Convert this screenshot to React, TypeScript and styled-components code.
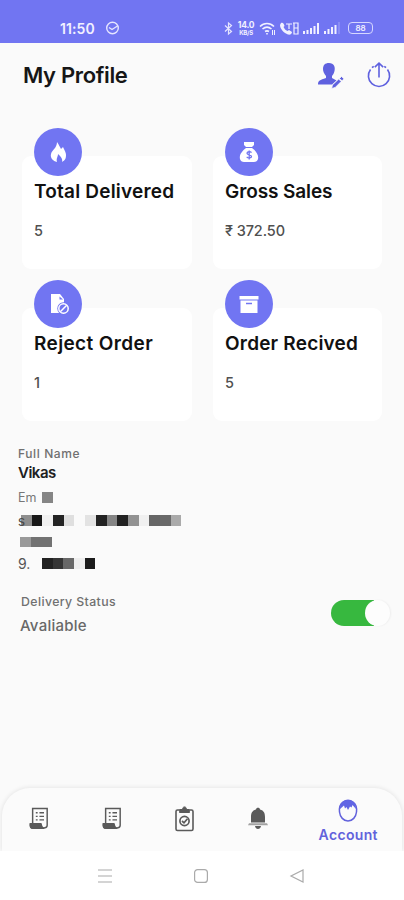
import React from "react";
import styled, { createGlobalStyle } from "styled-components";

const Global = createGlobalStyle`
  * { box-sizing: border-box; }
  body { margin: 0; background: #fafafa; font-family: Inter, "Liberation Sans", sans-serif; }
  svg { display: block; overflow: visible; }
`;

const ACCENT = "#7175f2";

const Screen = styled.div`
  width: 404px;
  height: 900px;
  display: flex;
  flex-direction: column;
  background: #fafafa;
  overflow: hidden;
`;
const StatusBar = styled.div`
  height: 43px;
  flex: none;
  display: flex;
  justify-content: space-between;
  padding: 17px 31px 0 60px;
  background: ${ACCENT};
  color: #f1f1ff;
`;
const Cluster = styled.div<{ $gap: number }>`
  display: flex;
  align-items: center;
  height: 22px;
  gap: ${(p) => p.$gap}px;
`;
const Clock = styled.span`
  width: 36px;
  font-size: 14px;
  font-weight: 600;
  letter-spacing: 0.1px;
`;
const NetSpeed = styled.div`
  display: flex;
  flex-direction: column;
  align-items: center;
  width: 18px;
  font-weight: 700;
  font-size: 8.5px;
  line-height: 10px;
  letter-spacing: -0.2px;
`;
const SpeedUnit = styled.span`
  margin-top: -1px;
  font-size: 6px;
  line-height: 7px;
`;
const Battery = styled.div`
  width: 25px;
  height: 12px;
  margin-left: 3px;
  border: 1px solid #d6d7ff;
  border-radius: 4px;
  font-size: 8px;
  line-height: 10px;
  font-weight: 600;
  text-align: center;
`;
const Header = styled.header`
  height: 64px;
  flex: none;
  display: flex;
  align-items: center;
  justify-content: space-between;
  padding: 0 13px 0 23px;
`;
const Title = styled.h1`
  margin: 0;
  font-size: 22px;
  font-weight: 600;
  letter-spacing: -0.35px;
  color: #161616;
`;
const Actions = styled.div`
  display: flex;
  gap: 23px;
  color: #5f61df;
`;
const Grid = styled.main`
  display: grid;
  grid-template-columns: 170px 169px;
  column-gap: 21px;
  row-gap: 39px;
  padding: 49px 0 0 22px;
`;
const Card = styled.section`
  height: 113px;
  padding: 0 12px;
  border-radius: 9px;
  background: #fff;
`;
const Badge = styled.div`
  width: 48px;
  height: 48px;
  margin-top: -28px;
  display: grid;
  place-items: center;
  border-radius: 50%;
  background: ${ACCENT};
`;
const CardTitle = styled.h2<{ $spacing: number }>`
  margin: 3px 0 0;
  font-size: 19px;
  line-height: 26px;
  font-weight: 600;
  white-space: nowrap;
  letter-spacing: ${(p) => p.$spacing}px;
  color: #111;
`;
const CardValue = styled.div`
  margin-top: 16px;
  font-size: 14.5px;
  line-height: 20px;
  font-weight: 500;
  letter-spacing: -0.1px;
  color: #505050;
`;
const Details = styled.section`
  padding: 23px 0 0 18px;
`;
const Line = styled.div<{ $h: number; $size: number; $color: string; $weight: number; $spacing?: number; $indent?: number }>`
  display: flex;
  align-items: center;
  height: ${(p) => p.$h}px;
  padding-left: ${(p) => p.$indent ?? 0}px;
  font-size: ${(p) => p.$size}px;
  font-weight: ${(p) => p.$weight};
  letter-spacing: ${(p) => p.$spacing ?? 0}px;
  color: ${(p) => p.$color};
  white-space: nowrap;
`;
const Leading = styled.span<{ $w: number }>`
  width: ${(p) => p.$w}px;
  flex: none;
`;
const Block = styled.span<{ $tone: string }>`
  width: 10.7px;
  height: 10.7px;
  flex: none;
  background: ${(p) => p.$tone};
`;
const StatusRow = styled.section`
  display: flex;
  justify-content: space-between;
  padding: 17px 17px 0 20px;
`;
const Track = styled.div`
  width: 56px;
  height: 26px;
  margin: 11px 0 0;
  display: flex;
  justify-content: flex-end;
  border-radius: 13px 0 0 13px;
  background: #37b83f;
`;
const TrackEnd = styled.div`
  display: flex;
  width: 13px;
  height: 26px;
  justify-content: flex-end;
  background: #fafafa;
`;
const Knob = styled.div`
  width: 25px;
  height: 26px;
  flex: none;
  margin-right: -3px;
  border-radius: 50%;
  background: #fdfdfd;
  box-shadow: 1px 0 2px rgba(0, 0, 0, 0.05);
`;
const Tabs = styled.nav`
  height: 63px;
  flex: none;
  margin: auto 2px 0;
  display: grid;
  grid-template-columns: repeat(4, 73.2px) 107px;
  border-radius: 28px 28px 0 0;
  background: #fbfbfb;
  box-shadow: 0 0 5px rgba(0, 0, 0, 0.11);
  clip-path: inset(-8px -2px 0 -2px);
`;
const Tab = styled.div<{ $active?: boolean }>`
  display: flex;
  flex-direction: column;
  align-items: center;
  padding-top: ${(p) => (p.$active ? 11 : 19)}px;
  gap: 3px;
  color: ${(p) => (p.$active ? "#6262dc" : "#5a5a5a")};
`;
const TabLabel = styled.span`
  font-size: 14px;
  line-height: 18px;
  font-weight: 600;
  letter-spacing: 0.35px;
`;
const SystemNav = styled.footer`
  height: 49px;
  flex: none;
  display: flex;
  justify-content: center;
  align-items: center;
  gap: 82px;
  padding-right: 2px;
  background: #fff;
`;

const Flame = () => (
  <svg width="18" height="22" viewBox="0 0 18 22">
    <path fill="#fff" d="M8 1c2 3 3 5 4 7l2-2c2 4 3 6 3 8 0 4-1 5-4 7 1-3-1-5-4-8 0 3-2 4-1 8-4-1-7-4-6-8C3 9 8 7 8 1Z" />
  </svg>
);
const MoneyBag = () => (
  <svg width="20" height="22" viewBox="0 0 20 22">
    <path fill="#fff" d="M5 1h10v3l-2 2H7L5 4ZM7 7h6c4 3 7 7 6 11-.5 2-2 3-4 3H5c-2 0-3.500-1-4-3C0 14 3 10 7 7Z" />
    <path fill="none" stroke={ACCENT} strokeWidth="1.300" d="M12.500 11.600c-1-1.300-4.500-1.200-4.500.7 0 2 4.500 1 4.500 3.200 0 1.800-3.500 2-4.800.4M10.200 9.500v9" />
  </svg>
);
const RejectDoc = () => (
  <svg width="20" height="22" viewBox="0 0 20 22">
    <path fill="#fff" d="M3 1h9l4 5v14H3Z" />
    <path fill={ACCENT} d="M11.500 3.500v3h3.500Z" />
    <circle cx="15.500" cy="15.500" r="6.200" fill={ACCENT} />
    <g fill="none" stroke="#fff" strokeWidth="1.500">
      <circle cx="15.500" cy="15.500" r="4.700" />
      <path d="m12.300 18.700 6.400-6.400" />
    </g>
  </svg>
);
const ArchiveBox = () => (
  <svg width="20" height="18" viewBox="0 0 20 18">
    <path fill="#fff" d="M.5 1h19v3.500H.5ZM1.500 5.500h17V18h-17Z" />
    <path stroke={ACCENT} strokeWidth="1.500" d="M7 8.500h6" />
  </svg>
);
const Scroll = () => (
  <svg width="20" height="23" viewBox="0 0 22 24" preserveAspectRatio="none" fill="none" stroke="currentColor" strokeWidth="1.600">
    <path d="M4 17V1.500h16V19c0 3-5 4-6 1l-1-2.500H1.500c-.5 3 .5 4.700 2.500 4.700h13" />
    <path fill="currentColor" d="M1.500 18h11.500l1 4H4c-2 0-2.500-2-2.500-4Z" />
    <path strokeWidth="1.400" d="M7.500 6h2m2 0h5M7.500 9.700h2m2 0h5M7.500 13.500h2m2 0h5" />
  </svg>
);
const Clipboard = () => (
  <svg width="19" height="25" viewBox="0 0 19 25" fill="none" stroke="currentColor">
    <rect x="1" y="3" width="17" height="20.500" rx="1.500" strokeWidth="1.600" />
    <path fill="currentColor" d="M5 2.500h2.500C7.500-1 11.500-1 11.500 2.500H14l.5 3h-10Z" />
    <circle cx="9.500" cy="14" r="4.600" strokeWidth="1.700" />
    <path strokeWidth="1.700" d="m7 14 2 1.800 3.500-4" />
  </svg>
);
const Bell = () => (
  <svg width="20" height="23" viewBox="0 0 20 23" fill="currentColor">
    <path d="M8 2.500c0-2.500 4-2.500 4 0 4 1 5 4 5 7.500v5.500H3V10c0-3.500 1-6.500 5-7.500ZM7 19h6c-.5 4-5.500 4-6 0Z" />
    <path d="M1 16.300h18l1 2H0Z" opacity=".55" />
  </svg>
);
const Face = () => (
  <svg width="20" height="24" viewBox="0 0 20 24">
    <path fill="none" stroke="currentColor" strokeWidth="1.500" d="M5 3C2 5 1 8 1.500 13c.5 5 4 9 8.500 9s8-4 8.500-9c.5-5-.5-8-3.500-10-3-2-7-2-10 0Z" />
    <path fill="#6165e4" d="M2 10C2 4 5 1 10 1s8 3 8 9l-3.500-4-1 2.500-1.500-1L10 11 8.500 8 7 9.500 6 6.500Z" />
  </svg>
);
const EditUser = () => (
  <svg width="26" height="26" viewBox="0 0 26 26" fill="currentColor">
    <path d="M11 1c5 0 6.500 4 5.500 8-.5 2-1.500 4-2.500 5v2l4.500 2.500-4.500 4H0c0-4 2-4.500 8-6.500v-2C6 12 5 9 5 7c0-4 2-6 6-6Z" />
    <path stroke="#fafafa" strokeWidth=".8" d="m23.500 14.500 2.500 2.300-2 2-2.500-2.300ZM20.700 17l2.500 2.500-6 6-3.500 1 .7-3.500Z" />
  </svg>
);
const Upload = () => (
  <svg width="24" height="26" viewBox="0 0 24 26" fill="none" stroke="currentColor" strokeWidth="1.600">
    <path d="M3.500 7.500a10.600 10.600 0 1 0 17 0M5 5.700l1.700-1.400M19 5.700l-1.700-1.400" />
    <path d="M12 15.500V1.500M7.800 5.200 12 1.200l4.200 4" />
  </svg>
);

const cards = [
  { title: "Total Delivered", value: "5", icon: <Flame />, spacing: 0.2 },
  { title: "Gross Sales", value: "₹ 372.50", icon: <MoneyBag />, spacing: -0.1 },
  { title: "Reject Order", value: "1", icon: <RejectDoc />, spacing: 0.38 },
  { title: "Order Recived", value: "5", icon: <ArchiveBox />, spacing: 0.2 },
];

const Blocks = ({ tones }: { tones: string[] }) => (
  <>{tones.map((tone, i) => <Block key={i} $tone={tone} />)}</>
);

export default function App() {
  return (
    <Screen>
      <Global />
      <StatusBar>
        <Cluster $gap={9}>
          <Clock>11:50</Clock>
          <svg width="15" height="14" viewBox="0 0 15 14" fill="none" stroke="#e5e5ff" strokeWidth="1.400">
            <circle cx="7.500" cy="7" r="5.800" />
            <path d="m4 6.500 3 2L12.500 5" />
          </svg>
        </Cluster>
        <Cluster $gap={4}>
          <svg width="9" height="13" viewBox="0 0 9 13" fill="none" stroke="#e5e5ff" strokeWidth="1.200">
            <path d="m1 3.500 6.500 6L4.500 12V1l3 2.500L1 9.500" />
          </svg>
          <NetSpeed>
            <span>14.0</span>
            <SpeedUnit>KB/S</SpeedUnit>
          </NetSpeed>
          <svg width="17" height="13" viewBox="0 0 17 13" fill="none" stroke="#f1f1ff" strokeWidth="1.600">
            <path d="M1 4.500c4-4 10-4 14 0M3.500 7c3-2.500 6-2.500 9 0M6 9.500c1.500-1 2.500-1 4 0M8 11v1.500" />
            <path strokeWidth="1" d="M13.500 8v5m2-5v5" />
          </svg>
          <svg width="19" height="13" viewBox="0 0 19 13" fill="#f1f1ff">
            <path d="M1 1c2-1 3 1 3.500 3L3.500 5c1 2 2 3 4 4L9 8l3 2c0 2-2 3-4 2.500C4 11 0 7 0 3Z" />
            <path fill="none" stroke="#f1f1ff" strokeWidth="1.200" d="M6 2h6M9 2v5M13 1h5v11h-4V1m0 5h4" />
          </svg>
          <svg width="17" height="12" viewBox="0 0 17 12" fill="#f1f1ff">
            <path d="M0 9h2v3H0ZM3.500 8h2v4h-2ZM7 6h2v6H7ZM10.500 4h2v8h-2ZM14 1h2v11h-2Z" />
          </svg>
          <svg width="17" height="12" viewBox="0 0 17 12" fill="#f1f1ff">
            <path d="M0 9h2v3H0ZM3.500 7h2v5h-2ZM7 5h2v7H7ZM10.500 3h2v9h-2Z" />
            <path opacity=".2" d="M14 0h2v12h-2Z" />
          </svg>
          <Battery>88</Battery>
        </Cluster>
      </StatusBar>
      <Header>
        <Title>My Profile</Title>
        <Actions>
          <EditUser />
          <Upload />
        </Actions>
      </Header>
      <Grid>
        {cards.map((c) => (
          <Card key={c.title}>
            <Badge>{c.icon}</Badge>
            <CardTitle $spacing={c.spacing}>{c.title}</CardTitle>
            <CardValue>{c.value}</CardValue>
          </Card>
        ))}
      </Grid>
      <Details>
        <Line $h={18} $size={12} $weight={500} $color="#707070" $spacing={0.6}>Full Name</Line>
        <Line $h={21} $size={15} $weight={600} $color="#202020" $spacing={-0.5}>Vikas</Line>
        <Line $h={29} $size={12.5} $weight={400} $color="#777">
          <Leading $w={24}>Em</Leading>
          <Block $tone="#858585" />
        </Line>
        <Line $h={17} $size={13} $weight={500} $color="#555">
          <Leading $w={3}>s</Leading>
          <Blocks tones={["rgba(70, 70, 70, 0.6)", "#181818", "#f1f1f1", "#242424", "#dfdfdf", "transparent", "#e3e3e3", "#222", "#858585", "#222", "#929292", "#f0f0f0", "#666", "#696969", "#aaa"]} />
        </Line>
        <Line $h={26} $size={13} $weight={400} $color="#777" $indent={2}>
          <Blocks tones={["#999", "#727272", "#727272"]} />
        </Line>
        <Line $h={17} $size={14} $weight={400} $color="#555">
          <Leading $w={24}>9.</Leading>
          <Blocks tones={["#222", "#353535", "#686868", "#eee", "#1b1b1b"]} />
        </Line>
      </Details>
      <StatusRow>
        <div>
          <Line $h={25} $size={12.3} $weight={500} $color="#707070" $indent={1} $spacing={0.4}>Delivery Status</Line>
          <Line $h={23} $size={15} $weight={500} $color="#686868" $spacing={0.25}>Avaliable</Line>
        </div>
        <Track>
          <TrackEnd><Knob /></TrackEnd>
        </Track>
      </StatusRow>
      <Tabs>
        <Tab><Scroll /></Tab>
        <Tab><Scroll /></Tab>
        <Tab><Clipboard /></Tab>
        <Tab><Bell /></Tab>
        <Tab $active><Face /><TabLabel>Account</TabLabel></Tab>
      </Tabs>
      <SystemNav>
        <svg width="14" height="14" viewBox="0 0 14 14" stroke="#aaa" strokeWidth="1.200"><path d="M0 1h14M0 7h14M0 13h14" /></svg>
        <svg width="14" height="14" viewBox="0 0 14 14" fill="none" stroke="#aaa" strokeWidth="1.200"><rect x=".6" y=".6" width="12.800" height="12.800" rx="3" /></svg>
        <svg width="14" height="14" viewBox="0 0 14 14" fill="none" stroke="#aaa" strokeWidth="1.200"><path d="M13 1v12L1 7Z" /></svg>
      </SystemNav>
    </Screen>
  );
}
